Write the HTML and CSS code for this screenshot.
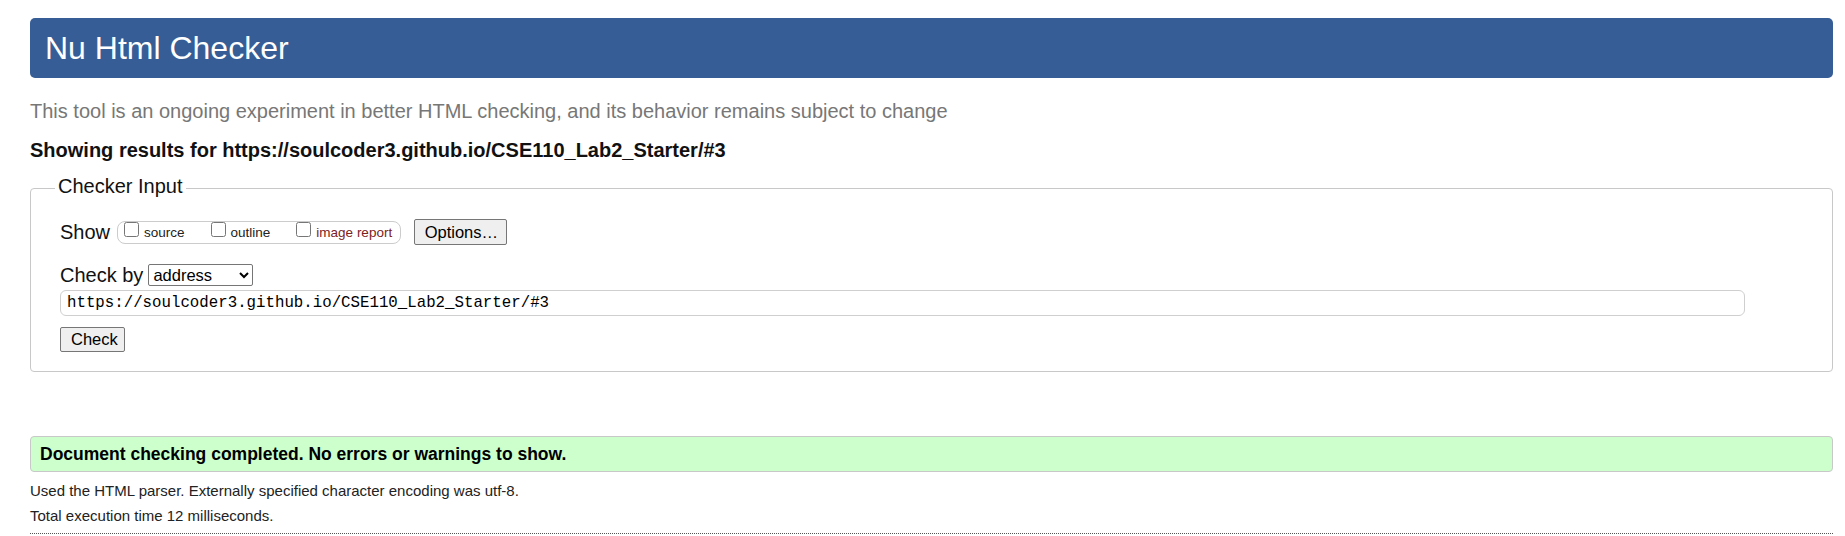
FILE: index.html
```html
<!DOCTYPE html>
<html lang="en">
<head>
<meta charset="utf-8">
<title>Showing results for https://soulcoder3.github.io/CSE110_Lab2_Starter/#3 - Nu Html Checker</title>
<link rel="stylesheet" href="styles.css">
</head>
<body>
<h1 class="title">Nu Html Checker</h1>
<p class="intro">This tool is an ongoing experiment in better HTML checking, and its behavior remains subject to change</p>
<p class="showing">Showing results for https://soulcoder3.github.io/CSE110_Lab2_Starter/#3</p>
<form class="checker-form">
  <fieldset class="checker-input">
    <legend class="checker-legend">Checker Input</legend>
    <div class="show-row">
      <span class="row-label show-label">Show</span>
      <div class="show-options">
        <label class="opt"><input class="cb" type="checkbox">source</label>
        <label class="opt"><input class="cb" type="checkbox">outline</label>
        <label class="opt opt-image"><input class="cb" type="checkbox">image report</label>
      </div>
      <button class="btn btn-options" type="button">Options…</button>
    </div>
    <div class="by-row">
      <label class="row-label by-label" for="docselect">Check by</label>
      <select class="doc-select" id="docselect">
        <option>address</option>
        <option>file upload</option>
        <option>text input</option>
      </select>
    </div>
    <input class="url-input" type="text" value="https://soulcoder3.github.io/CSE110_Lab2_Starter/#3">
    <div class="submit-row"><button class="btn btn-check" type="button">Check</button></div>
  </fieldset>
</form>
<p class="success">Document checking completed. No errors or warnings to show.</p>
<p class="details">Used the HTML parser. Externally specified character encoding was utf-8.</p>
<p class="details">Total execution time 12 milliseconds.</p>
<hr class="end-rule">
</body>
</html>
```

FILE: styles.css
```css
html, body {
  background: #ffffff;
}
body {
  margin: 0;
  padding: 18px 12px 0 30px;
  font-family: "Liberation Sans", Arial, sans-serif;
  color: #000;
}
.title {
  margin: 0;
  height: 60px;
  box-sizing: border-box;
  display: flex;
  align-items: center;
  padding: 0 15px;
  background: #365d95;
  color: #fff;
  border-radius: 5px;
  font-size: 32px;
  font-weight: normal;
  line-height: 1;
}
.intro {
  margin: 22px 0 0;
  font-size: 20px;
  line-height: 23px;
  color: #777;
}
.showing {
  margin: 15.5px 0 0;
  font-size: 20px;
  line-height: 22px;
  font-weight: bold;
  color: #111;
}
.checker-form {
  margin: 14.5px 0 0;
}
.checker-input {
  margin: 0;
  padding: 18px 29px 19px 29px;
  border: 1px solid #c8c8c8;
  border-radius: 4px;
  min-width: 0;
}
.checker-legend {
  font-size: 20px;
  line-height: 23px;
  padding: 0 3px 3px;
  margin-left: -5px;
  color: #111;
}
.show-row {
  display: flex;
  align-items: center;
  height: 26px;
}
.row-label {
  font-size: 20px;
  line-height: 23px;
  color: #111;
}
.show-label {
  margin-right: 6.5px;
}
.show-options {
  display: flex;
  align-items: center;
  height: 23px;
  box-sizing: border-box;
  border: 1px solid #cccccc;
  border-radius: 8px;
  padding: 0 7.5px 0 6.5px;
}
.opt {
  display: flex;
  align-items: center;
  font-size: 13.5px;
  color: #222;
  margin-right: 26px;
}
.opt:last-child {
  margin-right: 0;
}
.opt-image {
  color: #7d2222;
}
.cb {
  width: 15px;
  height: 15px;
  margin: 0 5px 5px 0;
}
.btn {
  font-family: "Liberation Sans", Arial, sans-serif;
  font-size: 16.5px;
  color: #000;
  background: #efefef;
  border: 1px solid #767676;
  border-radius: 2px;
  box-sizing: border-box;
  padding: 0 10px;
}
.btn-options {
  margin-left: 13px;
  height: 25.5px;
  width: 93px;
}
.by-row {
  display: flex;
  align-items: center;
  height: 25px;
  margin-top: 17.5px;
}
.by-label {
  margin-right: 5px;
}
.doc-select {
  width: 105px;
  height: 22.5px;
  box-sizing: border-box;
  font-family: "Liberation Sans", Arial, sans-serif;
  font-size: 16.5px;
  color: #000;
  background: #fff;
  border: 1px solid #767676;
  border-radius: 2px;
}
.url-input {
  display: block;
  margin-top: 2px;
  width: 1685px;
  height: 26px;
  box-sizing: border-box;
  padding: 0 6px;
  border: 1px solid #cfcfcf;
  border-radius: 6px;
  font-family: "Liberation Mono", "DejaVu Sans Mono", monospace;
  font-size: 15.75px;
  color: #000;
}
.submit-row {
  margin-top: 11.5px;
}
.btn-check {
  height: 25px;
  width: 65px;
  display: block;
}
.success {
  margin: 64px 0 0;
  height: 36px;
  box-sizing: border-box;
  display: flex;
  align-items: center;
  padding: 0 9px;
  background: #ccffcc;
  border: 1px solid #c8c8c8;
  border-radius: 4px;
  font-size: 17.5px;
  font-weight: bold;
  color: #000;
}
.details {
  margin: 0;
  font-size: 15px;
  line-height: 25px;
  color: #222;
}
.success + .details {
  margin-top: 6px;
}
.end-rule {
  margin: 5px 0 0;
  border: 0;
  border-top: 1px dotted #555;
  height: 0;
}
```
